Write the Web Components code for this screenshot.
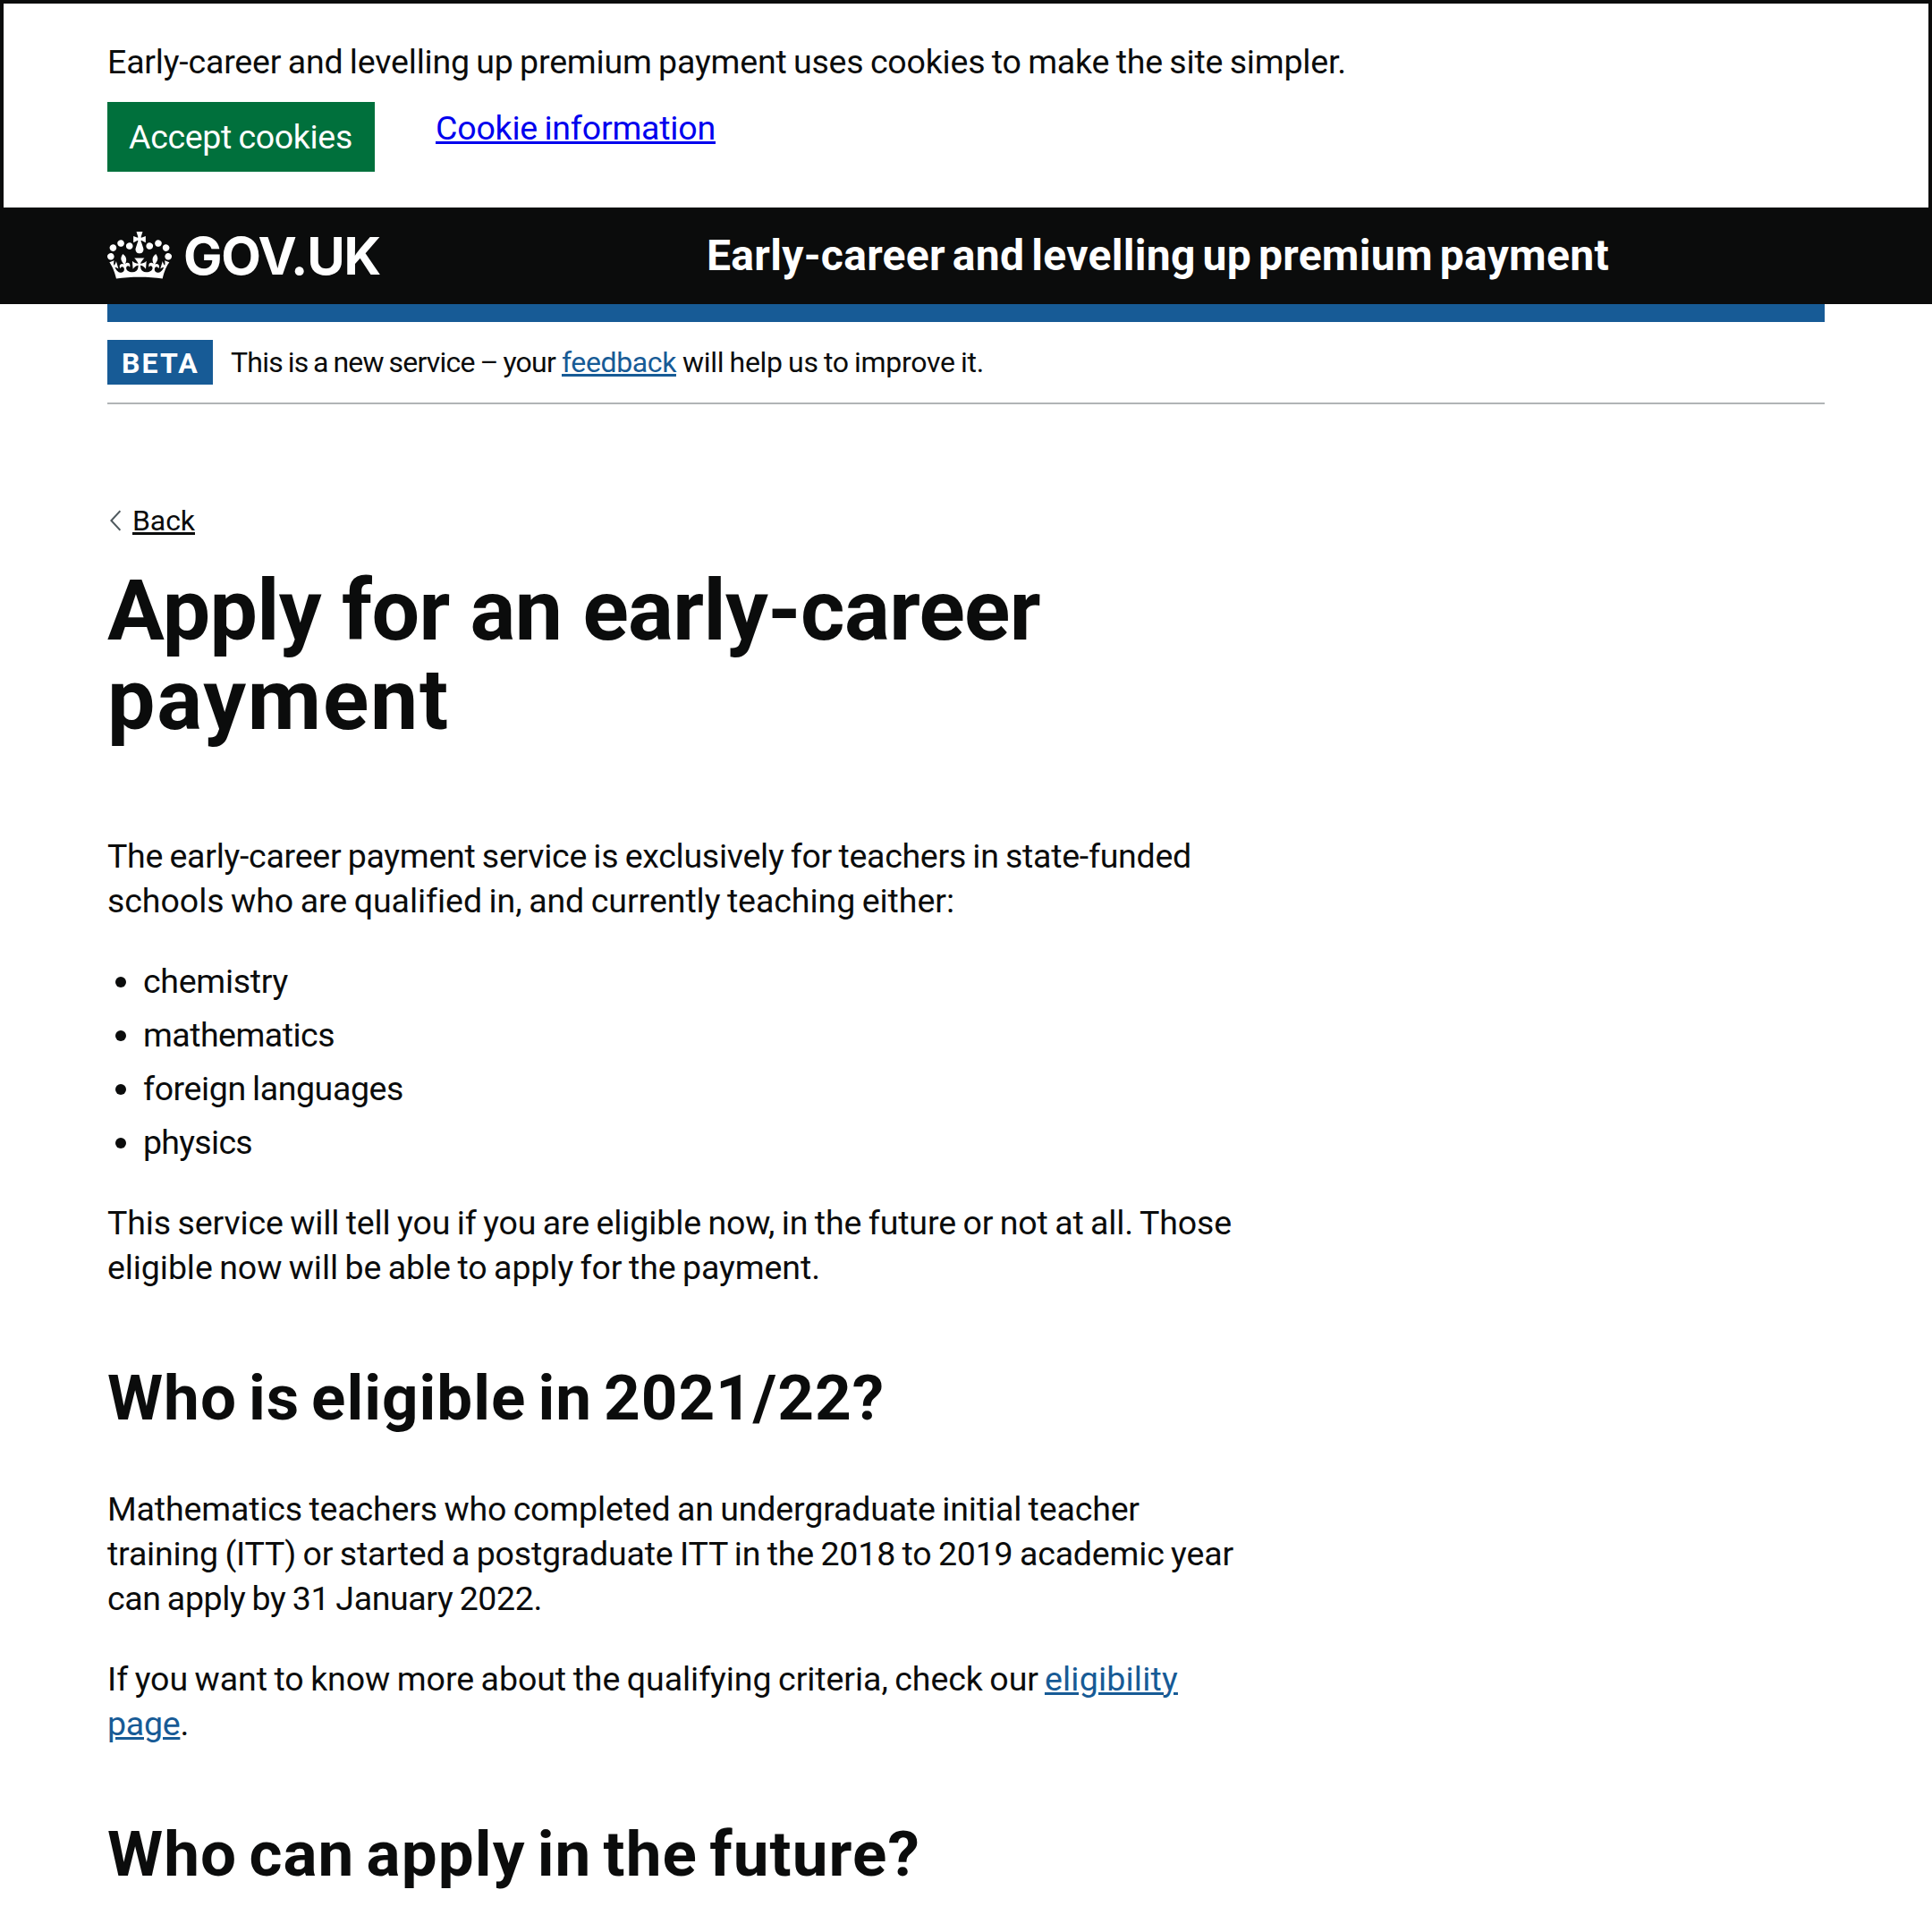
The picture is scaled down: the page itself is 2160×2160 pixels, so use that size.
<!DOCTYPE html>
<html lang="en">
<head>
<meta charset="utf-8">
<title>Apply for an early-career payment</title>
<style>
  html { background: #fff; }
  body { margin: 0; height: 2160px; overflow: hidden; color: #0b0c0c; font: 400 37.5px/50px Roboto, Arial, sans-serif; }
</style>
</head>
<body>
<cookie-banner>
  <text-line slot="message" width="1385">Early-career and levelling up premium payment uses cookies to make the site simpler.</text-line>
  <text-line slot="accept" width="250">Accept cookies</text-line>
  <text-line slot="info" width="313"><gov-link variant="plain">Cookie information</gov-link></text-line>
</cookie-banner>
<gov-header><text-line width="1009">Early-career and levelling up premium payment</text-line></gov-header>
<page-width>
  <phase-banner tag="BETA"><text-row><text-line width="363">This is a new service – your</text-line> <text-line width="128"><gov-link>feedback</gov-link></text-line> <text-line width="337">will help us to improve it.</text-line></text-row></phase-banner>
  <back-link><text-line width="70"><gov-link variant="text">Back</gov-link></text-line></back-link>
  <gov-heading size="xl"><text-line width="1043">Apply for an early-career</text-line><text-line width="383">payment</text-line></gov-heading>
  <gov-copy>
    <text-line width="1212">The early-career payment service is exclusively for teachers in state-funded</text-line>
    <text-line width="947">schools who are qualified in, and currently teaching either:</text-line>
  </gov-copy>
  <gov-list>
    <gov-item><text-line width="162">chemistry</text-line></gov-item>
    <gov-item><text-line width="214">mathematics</text-line></gov-item>
    <gov-item><text-line width="291">foreign languages</text-line></gov-item>
    <gov-item><text-line width="122">physics</text-line></gov-item>
  </gov-list>
  <gov-copy>
    <text-line width="1257">This service will tell you if you are eligible now, in the future or not at all. Those</text-line>
    <text-line width="797">eligible now will be able to apply for the payment.</text-line>
  </gov-copy>
  <gov-heading size="l"><text-line width="869">Who is eligible in 2021/22?</text-line></gov-heading>
  <gov-copy>
    <text-line width="1154">Mathematics teachers who completed an undergraduate initial teacher</text-line>
    <text-line width="1259">training (ITT) or started a postgraduate ITT in the 2018 to 2019 academic year</text-line>
    <text-line width="486">can apply by 31 January 2022.</text-line>
  </gov-copy>
  <gov-copy>
    <text-row><text-line width="1041">If you want to know more about the qualifying criteria, check our</text-line> <text-line width="149"><gov-link>eligibility</gov-link></text-line></text-row>
    <text-line width="91"><gov-link>page</gov-link>.</text-line>
  </gov-copy>
  <gov-heading size="l"><text-line width="909">Who can apply in the future?</text-line></gov-heading>
</page-width>

<script>
const define = (name, html, setup) => customElements.define(name, class extends HTMLElement {
  connectedCallback() {
    if (this.shadowRoot) return;
    this.attachShadow({ mode: 'open' }).innerHTML = html;
    if (setup) setup(this);
  }
});

define('cookie-banner', `<style>
  :host { display: flex; flex-direction: column; gap: 20px; box-sizing: border-box; height: 236px; padding: 40px 116px 0; border: 4px solid #0b0c0c; background: #fff; }
  .row { display: flex; align-items: flex-start; gap: 68px; }
  button { display: block; box-sizing: border-box; width: 299px; height: 78px; margin: 0; padding: 14px 24px; border: 0; border-radius: 0; background: #00703c; color: #fff; font: inherit; text-align: left; }
  .info { padding-top: 4px; }
</style>
<slot name="message"></slot>
<div class="row"><button type="button"><slot name="accept"></slot></button><div class="info"><slot name="info"></slot></div></div>`);

define('gov-header', `<style>
  :host { display: flex; align-items: flex-start; box-sizing: border-box; height: 104px; padding: 0 120px; background: #0b0c0c; color: #fff; font-weight: 700; --word: -.09em; }
  .brand { display: flex; align-items: flex-start; width: 670px; }
  svg { display: block; width: 72px; height: 53px; margin-top: 23px; }
  .mark { padding: 20px 0 0 13px; font: 700 58px/60px Inter, sans-serif; }
  .title { padding-top: 20px; font-size: 48px; line-height: 60px; }
</style>
<div class="brand">
<svg viewBox="0 0 132 97" fill="#fff" aria-hidden="true"><path fill-rule="evenodd" d="M25 30.2c3.5 1.5 7.7-.2 9.1-3.7 1.5-3.6-.2-7.8-3.9-9.2-3.6-1.4-7.6.3-9.1 3.9-1.4 3.5.3 7.5 3.9 9zM9 39.5c3.6 1.5 7.8-.2 9.2-3.7 1.5-3.6-.2-7.8-3.9-9.1-3.6-1.5-7.6.2-9.1 3.8-1.4 3.5.3 7.5 3.8 9zM4.4 57.2c3.5 1.5 7.7-.2 9.1-3.8 1.5-3.6-.2-7.7-3.9-9.1-3.5-1.5-7.6.3-9.1 3.8-1.4 3.5.3 7.6 3.9 9.1zm38.3-21.4c3.5 1.5 7.7-.2 9.1-3.8 1.5-3.6-.2-7.7-3.9-9.1-3.6-1.5-7.6.3-9.1 3.8-1.3 3.6.4 7.7 3.9 9.1zm64.4-5.6c-3.6 1.5-7.8-.2-9.1-3.7-1.5-3.6.2-7.8 3.8-9.2 3.6-1.4 7.7.3 9.2 3.9 1.3 3.5-.4 7.5-3.9 9zm15.9 9.3c-3.6 1.5-7.7-.2-9.1-3.7-1.5-3.6.2-7.8 3.7-9.1 3.6-1.5 7.7.2 9.2 3.8 1.5 3.5-.3 7.5-3.8 9zm4.7 17.7c-3.6 1.5-7.8-.2-9.2-3.8-1.5-3.6.2-7.7 3.9-9.1 3.6-1.5 7.7.3 9.2 3.8 1.3 3.5-.4 7.6-3.9 9.1zM89.3 35.8c-3.6 1.5-7.8-.2-9.2-3.8-1.4-3.6.2-7.7 3.9-9.1 3.6-1.5 7.7.3 9.2 3.8 1.4 3.6-.3 7.7-3.9 9.1zM69.7 17.7l8.9 4.7V9.3l-8.9 2.8c-.2-.3-.5-.6-.9-.9L72.4 0H59.6l3.5 11.2c-.3.3-.6.5-.9.9l-8.8-2.8v13.1l8.8-4.7c.3.3.6.7.9.9l-5 15.4v.1c-.2.8-.4 1.6-.4 2.4 0 4.1 3.1 7.5 7 8.1h.2c.3 0 .7.1 1 .1.4 0 .7 0 1-.1h.2c4-.6 7.1-4.1 7.1-8.1 0-.8-.1-1.7-.4-2.4V34l-5.1-15.4c.4-.2.7-.6 1-.9zM66 92.8c16.9 0 32.8 1.1 47.1 3.2 4-16.9 8.9-26.7 14-33.5l-9.6-3.4c1 4.9 1.1 7.2 0 10.2-1.5-1.4-3-4.3-4.2-8.7L108.6 76c2.8-2 5-3.2 7.5-3.3-4.4 9.4-10 11.9-13.6 11.2-4.3-.8-6.3-4.6-5.6-7.9 1-4.7 5.7-5.9 8-.5 4.3-8.7-3-11.4-7.6-8.8 7.1-7.2 7.9-13.5 2.1-21.1-8 6.1-8.1 12.3-4.5 20.8-4.7-5.4-12.1-2.5-9.5 6.2 3.4-5.2 7.9-2 7.2 3.1-.6 4.3-6.4 7.8-13.5 7.2-10.3-.9-10.9-8-11.2-13.8 2.5-.5 7.1 1.8 11 7.3L80.2 60c-4.1 4.4-8 5.3-12.3 5.4 1.4-4.4 8-11.6 8-11.6H55.5s6.4 7.2 7.9 11.6c-4.2-.1-8-1-12.3-5.4l1.4 16.4c3.9-5.5 8.5-7.7 10.9-7.3-.3 5.8-.9 12.8-11.1 13.8-7.2.6-12.9-2.9-13.5-7.2-.7-5 3.8-8.3 7.1-3.1 2.7-8.7-4.6-11.6-9.4-6.2 3.7-8.5 3.6-14.7-4.6-20.8-5.8 7.6-5 13.9 2.2 21.1-4.7-2.6-11.9.1-7.7 8.8 2.3-5.5 7.1-4.2 8.1.5.7 3.3-1.3 7.1-5.7 7.9-3.5.7-9-1.8-13.5-11.2 2.5.1 4.7 1.3 7.5 3.3l-4.7-15.4c-1.2 4.4-2.7 7.2-4.3 8.7-1.1-3-.9-5.3 0-10.2l-9.5 3.4c5 6.9 9.9 16.7 14 33.5 14.8-2.1 30.8-3.2 47.7-3.2z"/></svg>
<div class="mark"><text-line width="220">GOV.UK</text-line></div>
</div>
<div class="title"><slot></slot></div>`);

define('page-width', `<style>
  :host { display: flex; flex-direction: column; margin: 0 120px; border-top: 20px solid #175b96; }
</style><slot></slot>`);

define('phase-banner', `<style>
  :host { display: flex; align-items: flex-start; gap: 20px; box-sizing: border-box; height: 92px; padding-top: 20px; border-bottom: 2px solid #b1b4b6; font-size: 32px; line-height: 40px; }
  .tag { box-sizing: border-box; width: 118px; height: 50px; padding: 6px 0 0 16px; background: #175b96; color: #fff; font-weight: 700; }
  .text { padding-top: 5px; }
</style>
<div class="tag"><text-line width="87"></text-line></div><div class="text"><slot></slot></div>`,
  host => { host.shadowRoot.querySelector('text-line').textContent = host.getAttribute('tag'); });

define('back-link', `<style>
  :host { display: flex; align-items: flex-start; gap: 13px; margin-top: 110px; font-size: 32px; line-height: 40px; }
  svg { display: block; width: 12px; height: 24px; margin: 8px 0 0 3px; }
</style>
<svg viewBox="0 0 12 24" fill="none" stroke="#505a5f" stroke-width="2" aria-hidden="true"><path d="M11.4 1.2L1.4 12l10 10.8"/></svg><slot></slot>`);

define('gov-heading', `<style>
  :host { display: flex; flex-direction: column; align-items: flex-start; font-weight: 700; }
  :host([size="xl"]) { margin: 31px 0 59px; font-size: 95px; line-height: 100px; --word: 0em; }
  :host([size="l"]) { margin: 83px 0 22px; font-size: 71px; line-height: 75px; --word: -.08em; }
</style><slot></slot>`);

define('gov-copy', `<style>
  :host { display: flex; flex-direction: column; align-items: flex-start; margin-top: 40px; }
</style><slot></slot>`);

define('gov-list', `<style>
  :host { display: flex; flex-direction: column; gap: 10px; margin-top: 40px; }
</style><slot></slot>`);

define('gov-item', `<style>
  :host { display: flex; align-items: center; gap: 19px; padding-left: 9px; }
  i { width: 12px; height: 12px; margin-top: 2px; border-radius: 50%; background: #0b0c0c; }
</style><i></i><slot></slot>`);

define('gov-link', `<style>
  :host { display: inline; }
  a { color: #175b96; text-decoration: underline; text-decoration-thickness: 3px; text-underline-offset: 2px; }
  :host([variant="plain"]) a { color: #00e; }
  :host([variant="text"]) a { color: #0b0c0c; }
</style><a href="#"><slot></slot></a>`);

/* Sets several runs of text side by side, a word space apart. */
define('text-row', `<style>
  :host { display: flex; gap: 7px; }
</style><slot></slot>`);

/* One line of copy, tracked so that it fills the measure given in its width attribute. */
define('text-line', `<style>
  :host { display: block; width: max-content; white-space: nowrap; }
  span { display: inline-block; vertical-align: top; word-spacing: var(--word, -.045em); }
</style><span><slot></slot></span>`);

const track = root => root.querySelectorAll('*').forEach(el => {
  if (el.shadowRoot) track(el.shadowRoot);
  if (el.localName !== 'text-line') return;
  const span = el.shadowRoot.querySelector('span');
  const target = Number(el.getAttribute('width'));
  const count = el.textContent.trim().length;
  span.style.letterSpacing = '0.001px';
  span.style.letterSpacing = (target - span.getBoundingClientRect().width) / count + 'px';
});
track(document);
</script>
</body>
</html>
